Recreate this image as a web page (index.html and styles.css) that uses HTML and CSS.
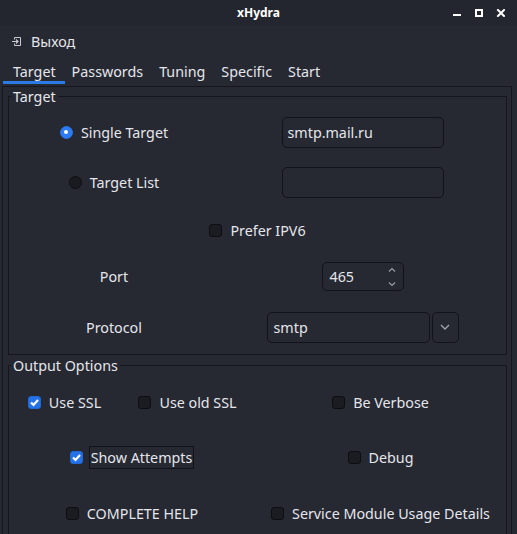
FILE: index.html
```html
<!DOCTYPE html>
<html lang="ru">
<head>
<meta charset="utf-8">
<title>xHydra</title>
<link rel="stylesheet" href="styles.css">
</head>
<body>
<div class="window">
  <header class="titlebar">
    <span class="title">xHydra</span>
    <svg class="wm" width="52" height="8" viewBox="0 0 52 8">
      <rect x="0" y="5" width="8" height="2" fill="#ffffff"/>
      <rect x="23" y="1" width="6" height="6" fill="none" stroke="#ffffff" stroke-width="2"/>
      <path d="M45 1 L51 7 M51 1 L45 7" stroke="#ffffff" stroke-width="2" stroke-linecap="square"/>
    </svg>
  </header>

  <nav class="menubar">
    <svg class="menu-icon" width="9" height="9" viewBox="0 0 9 9">
      <path d="M2.5 0.5 H8.5 V8.5 H2.5 V6.5 M2.5 2.5 V0.5" fill="none" stroke="#c9cbd1" stroke-width="1"/>
      <path d="M0 4.5 H6 M4 2.5 L6 4.5 L4 6.5" fill="none" stroke="#c9cbd1" stroke-width="1.2"/>
    </svg>
    <span>Выход</span>
  </nav>

  <div class="tabbar">
    <span class="tab active">Target</span>
    <span class="tab">Passwords</span>
    <span class="tab">Tuning</span>
    <span class="tab">Specific</span>
    <span class="tab">Start</span>
  </div>

  <section class="tabpage">
    <fieldset class="group">
      <legend>Target</legend>
      <div class="grid-target">
        <label class="opt"><span class="rb on"></span><span>Single Target</span></label>
        <div class="field">smtp.mail.ru</div>

        <label class="opt"><span class="rb"></span><span>Target List</span></label>
        <div class="field"></div>

        <label class="opt span2"><span class="cb"></span><span>Prefer IPV6</span></label>

        <span>Port</span>
        <div class="spin">
          <span>465</span>
          <svg class="spin-arrows" width="8" height="20" viewBox="0 0 8 20">
            <path d="M1 4.5 L4 1.5 L7 4.5" fill="none" stroke="#9a9ca6" stroke-width="1.2"/>
            <path d="M1 15.5 L4 18.5 L7 15.5" fill="none" stroke="#9a9ca6" stroke-width="1.2"/>
          </svg>
        </div>

        <span>Protocol</span>
        <div class="combo">
          <div class="combo-field">smtp</div>
          <div class="combo-btn">
            <svg width="10" height="6" viewBox="0 0 10 6">
              <path d="M1 1 L5 5 L9 1" fill="none" stroke="#a3a5ae" stroke-width="1.3"/>
            </svg>
          </div>
        </div>
      </div>
    </fieldset>

    <fieldset class="group output">
      <legend>Output Options</legend>
      <div class="grid-output">
        <label class="opt"><span class="cb on"><svg width="11" height="11" viewBox="0 0 11 11"><path d="M2 5.5 L4.5 8 L9 3" fill="none" stroke="#ffffff" stroke-width="2.2"/></svg></span><span>Use SSL</span></label>
        <label class="opt"><span class="cb"></span><span>Use old SSL</span></label>
        <label class="opt"><span class="cb"></span><span>Be Verbose</span></label>

        <label class="opt span2 tight"><span class="cb on"><svg width="11" height="11" viewBox="0 0 11 11"><path d="M2 5.5 L4.5 8 L9 3" fill="none" stroke="#ffffff" stroke-width="2.2"/></svg></span><span class="focus">Show Attempts</span></label>
        <label class="opt"><span class="cb"></span><span>Debug</span></label>

        <label class="opt span2"><span class="cb"></span><span>COMPLETE HELP</span></label>
        <label class="opt"><span class="cb"></span><span>Service Module Usage Details</span></label>
      </div>
    </fieldset>
  </section>
</div>
</body>
</html>
```

FILE: styles.css
```css
* { box-sizing: border-box; }

html, body { margin: 0; }

body {
  width: 517px;
  height: 534px;
  overflow: hidden;
  background: #262832;
  color: #e4e6eb;
  font-family: "Noto Sans", "DejaVu Sans", sans-serif;
  font-size: 14.3px;
  line-height: 19px;
}

.window {
  width: 517px;
  height: 534px;
  display: flex;
  flex-direction: column;
}

.titlebar {
  height: 25px;
  flex: none;
  display: grid;
  grid-template-columns: 1fr auto 1fr;
  align-items: center;
  background: #24262f;
}

.title {
  grid-column: 2;
  font-size: 12px;
  font-weight: bold;
  color: #ffffff;
}

.wm {
  grid-column: 3;
  justify-self: end;
  margin-right: 12px;
  display: block;
}

.menubar {
  height: 32px;
  flex: none;
  display: flex;
  align-items: center;
  gap: 10px;
  padding-left: 12px;
}

.menu-icon { display: block; }

.tabbar {
  height: 29px;
  flex: none;
  display: flex;
  align-items: flex-start;
  padding-left: 3px;
}

.tab {
  height: 27px;
  padding: 5px 9px 0 7px;
}

.tab.active {
  padding-left: 10px;
  border-bottom: 3px solid #2b7be6;
}

.tabpage {
  flex: 1;
  margin: 0 5px 0 2px;
  border: 1px solid #16171c;
  border-bottom: none;
  padding: 0 4px 0 5px;
  overflow: hidden;
}

.group {
  margin: 0;
  padding: 0;
  min-width: 0;
  border: 1px solid #16171c;
}

.group legend {
  margin-left: 2px;
  padding: 0 2px;
  line-height: 19px;
}

.output { margin-top: 1px; }

.grid-target {
  display: grid;
  grid-template-columns: 210px 1fr;
  grid-template-rows: 52px 49px 46px 47px 54px;
  align-items: center;
  justify-items: center;
}

.grid-output {
  display: grid;
  grid-template-columns: 111px 135px 1fr;
  grid-template-rows: 54px 56px 56px;
  align-items: center;
  justify-items: center;
}

.span2 { grid-column: 1 / span 2; }

.opt {
  display: flex;
  align-items: center;
  gap: 8px;
}

.opt.tight { gap: 6px; }

.focus {
  border: 1px solid #121318;
  padding: 1px;
}

.rb {
  width: 13px;
  height: 13px;
  border-radius: 50%;
  background: #1a1b21;
  border: 1px solid #0e0f12;
  display: flex;
  align-items: center;
  justify-content: center;
}

.rb.on {
  background: #2d7cf3;
  border-color: #2a74e4;
}

.rb.on::after {
  content: "";
  width: 4px;
  height: 4px;
  border-radius: 50%;
  background: #ffffff;
}

.cb {
  width: 13px;
  height: 13px;
  border-radius: 3px;
  background: #1b1c22;
  border: 1px solid #0d0e11;
  display: flex;
  align-items: center;
  justify-content: center;
}

.cb.on {
  background: #2472e6;
  border-color: #2068d6;
}

.cb svg { display: block; }

.field {
  width: 162px;
  height: 31px;
  border: 1px solid #121318;
  border-radius: 5px;
  background: #262832;
  padding-left: 5px;
  display: flex;
  align-items: center;
}

.spin {
  width: 82px;
  height: 29px;
  border: 1px solid #121318;
  border-radius: 5px;
  padding: 0 7px 0 7px;
  display: flex;
  align-items: center;
  justify-content: space-between;
}

.spin-arrows { display: block; }

.combo {
  display: flex;
  gap: 2px;
}

.combo-field {
  width: 163px;
  height: 31px;
  border: 1px solid #121318;
  border-radius: 5px;
  padding-left: 6px;
  display: flex;
  align-items: center;
}

.combo-btn {
  width: 27px;
  height: 31px;
  border: 1px solid #121318;
  border-radius: 5px;
  display: flex;
  align-items: center;
  justify-content: center;
}

.combo-btn svg { display: block; }
```
